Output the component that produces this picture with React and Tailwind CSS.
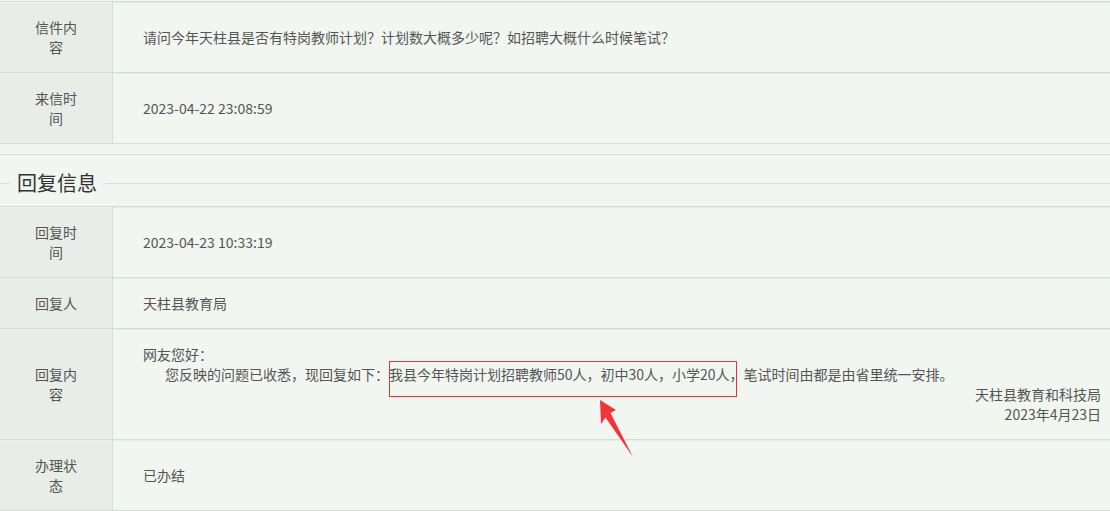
const font = { fontFamily: '"Microsoft YaHei", "Noto Sans CJK SC", sans-serif' };

const Row = ({ label, children, labelWidth = 'w-[44px]' }) => (
  <div className="grid grid-cols-[113px_1fr] border-t border-[#d6dcd6]">
    <div className="flex items-center justify-center bg-[#e8ede8] border-r border-[#d6dcd6] py-[15px] shadow-[inset_0_1px_0_#eef3ee]">
      <div className={`${labelWidth} text-center text-[14px] leading-[20px] text-[#555]`}>
        {label}
      </div>
    </div>
    <div className="flex items-center bg-[#f1f6f1] pl-[30px] pr-[9px] py-[15px] text-[14px] leading-[20px] text-[#555] shadow-[inset_0_1px_0_#e6ede6]">
      {children}
    </div>
  </div>
);

const App = () => {
  return (
    <div className="relative w-[1110px] h-[511px] overflow-hidden bg-[#f1f6f1]" style={font}>
      <div className="pt-px">
        <Row label="信件内容">
          请问今年天柱县是否有特岗教师计划？计划数大概多少呢？如招聘大概什么时候笔试？
        </Row>
        <Row label="来信时间">2023-04-22 23:08:59</Row>
      </div>

      <div className="border-t border-[#d6dcd6] h-[11px]" />

      <div className="border-t border-[#d6dcd6] pt-[14px] pb-[9px]">
        <div className="flex items-center h-[28px]">
          <div className="w-[10px] border-t border-[#d6dcd6]" />
          <span className="ml-[7px] mr-[8px] text-[20px] leading-[28px] text-[#333]">
            回复信息
          </span>
          <div className="flex-1 border-t border-[#d6dcd6]" />
        </div>
      </div>

      <div>
        <Row label="回复时间">2023-04-23 10:33:19</Row>
        <Row label="回复人">天柱县教育局</Row>
        <Row label="回复内容">
          <div className="w-full">
            <p>网友您好：</p>
            <p className="pl-[22px]">
              您反映的问题已收悉，现回复如下：我县今年特岗计划招聘教师50人，初中30人，小学20人，笔试时间由都是由省里统一安排。
            </p>
            <p className="text-right">天柱县教育和科技局</p>
            <p className="text-right">2023年4月23日</p>
          </div>
        </Row>
        <Row label="办理状态">已办结</Row>
        <div className="border-t border-[#d6dcd6]" />
      </div>

      <div className="absolute left-[389px] top-[361px] w-[348px] h-[36px] border border-[#e0323c]" />
      <svg className="absolute left-0 top-0" width="1110" height="511" viewBox="0 0 1110 511">
        <polygon
          points="600,400 616,410 610.5,413 633,457 605.5,417.5 601,424"
          fill="#f2343a"
        />
      </svg>
    </div>
  );
};

export default App;
